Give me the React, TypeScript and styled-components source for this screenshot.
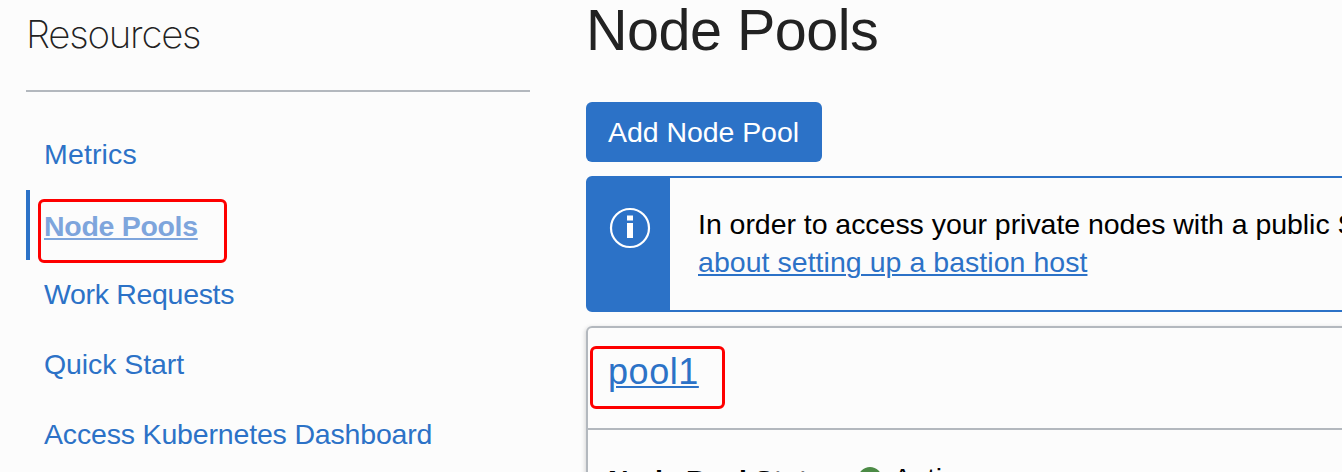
import React from "react";
import styled, { createGlobalStyle } from "styled-components";

const GlobalStyle = createGlobalStyle`
  * { box-sizing: border-box; }
  html, body { margin: 0; padding: 0; overflow: hidden; background: #fcfcfc; }
  body { font-family: "Liberation Sans", Arial, sans-serif; font-size: 28.5px; color: #000; }
`;

const Page = styled.div`
  display: grid;
  grid-template-columns: 504px 1fr;
  column-gap: 56px;
  width: 1342px;
  height: 472px;
  padding-left: 26px;
  overflow: hidden;
  background: #fcfcfc;
`;

const Sidebar = styled.aside`
  display: flex;
  flex-direction: column;
`;

const SidebarTitle = styled.h2`
  margin: 0 0 28px;
  height: 92px;
  padding-top: 12px;
  border-bottom: 2px solid #b3b8be;
  font-family: Inter, "Liberation Sans", sans-serif;
  font-size: 38.5px;
  font-weight: 200;
  line-height: 44px;
  letter-spacing: -1.25px;
  color: #222;
`;

const Nav = styled.nav`
  display: flex;
  flex-direction: column;
`;

const NavItem = styled.div<{ $active?: boolean }>`
  height: 70px;
  padding: ${(p) => (p.$active ? "20px 0 0 14px" : "18px 0 0 14px")};
  border-left: 4px solid ${(p) => (p.$active ? "#2c72c7" : "transparent")};
  line-height: 32px;
`;

const NavLink = styled.a<{ $active?: boolean; $spacing: number }>`
  position: relative;
  display: inline-block;
  white-space: nowrap;
  color: ${(p) => (p.$active ? "#7ea5dc" : "#2c72c7")};
  font-weight: ${(p) => (p.$active ? 700 : 400)};
  letter-spacing: ${(p) => p.$spacing}px;
  text-decoration: ${(p) => (p.$active ? "underline" : "none")};
  text-decoration-thickness: 2px;
  text-underline-offset: 2px;
`;

const Highlight = styled.span<{ $w: number; $h: number; $x: number; $y: number }>`
  position: absolute;
  left: ${(p) => p.$x}px;
  top: ${(p) => p.$y}px;
  width: ${(p) => p.$w}px;
  height: ${(p) => p.$h}px;
  border: 3px solid #fe0000;
  border-radius: 6px;
  pointer-events: none;
`;

const Main = styled.main`
  display: flex;
  flex-direction: column;
  align-items: flex-start;
  min-width: 0;
`;

const Title = styled.h1`
  margin: 0;
  height: 102px;
  font-size: 57.5px;
  font-weight: 400;
  line-height: 60px;
  letter-spacing: -0.5px;
  color: #222;
`;

const AddButton = styled.button`
  flex: none;
  width: 236px;
  height: 60px;
  margin: 0 0 14px;
  padding: 0 0 0 22px;
  border: 0;
  border-radius: 6px;
  background: #2c72c7;
  color: #fff;
  font: inherit;
  line-height: 60px;
  text-align: left;
  white-space: nowrap;
`;

const Notice = styled.section`
  flex: none;
  display: flex;
  width: 800px;
  height: 136px;
  margin-bottom: 14px;
  border: 2px solid #2c72c7;
  border-radius: 6px;
`;

const NoticeIcon = styled.div`
  flex: none;
  width: 82px;
  padding: 28px 0 0 20px;
  background: #2c72c7;
`;

const NoticeText = styled.p`
  margin: 0;
  padding: 27px 0 0 28px;
  line-height: 38px;
  white-space: nowrap;
`;

const TextRun = styled.span<{ $spacing: number }>`
  letter-spacing: ${(p) => p.$spacing}px;
`;

const Link = styled.a<{ $spacing: number }>`
  color: #2c72c7;
  letter-spacing: ${(p) => p.$spacing}px;
  text-decoration: underline;
  text-decoration-thickness: 2px;
  text-underline-offset: 2px;
`;

const Card = styled.section`
  flex: none;
  width: 800px;
  height: 300px;
  border: 2px solid #b3b8be;
  border-radius: 6px;
  box-shadow: -1px 1px 4px rgba(0, 0, 0, 0.15);
`;

const CardHeader = styled.header`
  height: 102px;
  padding: 24px 0 0 20px;
  border-bottom: 2px solid #b3b8be;
  line-height: 40px;
`;

const PoolLink = styled.a`
  position: relative;
  display: inline-block;
  color: #2c72c7;
  font-size: 36px;
  letter-spacing: 0.55px;
  text-decoration: underline;
  text-decoration-thickness: 2px;
  text-underline-offset: 2px;
`;

const CardBody = styled.div`
  display: flex;
  padding: 32px 0 0 20px;
  line-height: 32px;
`;

const StatusLabel = styled.strong`
  width: 250px;
  padding-top: 2px;
  letter-spacing: -0.25px;
  white-space: nowrap;
`;

const StatusDot = styled.span`
  width: 24px;
  height: 24px;
  margin: 5px 11px 0 0;
  border-radius: 50%;
  background: #4c8b46;
`;

const navItems = [
  { label: "Metrics", spacing: 0.15 },
  { label: "Node Pools", spacing: -0.3, active: true },
  { label: "Work Requests", spacing: -0.32 },
  { label: "Quick Start", spacing: -0.08 },
  { label: "Access Kubernetes Dashboard", spacing: -0.17 },
];

export default function App() {
  return (
    <>
      <GlobalStyle />
      <Page>
        <Sidebar>
          <SidebarTitle>Resources</SidebarTitle>
          <Nav>
            {navItems.map((item) => (
              <NavItem key={item.label} $active={item.active}>
                <NavLink $active={item.active} $spacing={item.spacing}>
                  {item.label}
                  {item.active && <Highlight $x={-6.5} $y={-11} $w={189.5} $h={63.5} />}
                </NavLink>
              </NavItem>
            ))}
          </Nav>
        </Sidebar>
        <Main>
          <Title>Node Pools</Title>
          <AddButton>
            <TextRun $spacing={-0.06}>Add Node Pool</TextRun>
          </AddButton>
          <Notice>
            <NoticeIcon>
              <svg width="44" height="44" viewBox="0 0 44 44" fill="none">
                <circle cx="22" cy="22" r="19" stroke="#fff" strokeWidth="2.2" />
                <path d="M19 9.5h6v5h-6zM19 17h6v15h-6z" fill="#fff" />
              </svg>
            </NoticeIcon>
            <NoticeText>
              <TextRun $spacing={-0.04}>In order to access your private nodes with a public SSH key</TextRun>
              <br />
              <Link $spacing={0.04}>about setting up a bastion host</Link>
            </NoticeText>
          </Notice>
          <Card>
            <CardHeader>
              <PoolLink>
                pool1
                <Highlight $x={-18.5} $y={-6} $w={135.5} $h={63} />
              </PoolLink>
            </CardHeader>
            <CardBody>
              <StatusLabel>Node Pool Status:</StatusLabel>
              <StatusDot />
              <TextRun $spacing={0.5}>Active</TextRun>
            </CardBody>
          </Card>
        </Main>
      </Page>
    </>
  );
}
